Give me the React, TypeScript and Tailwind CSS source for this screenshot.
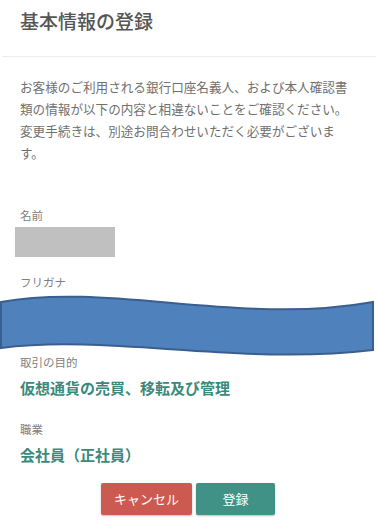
const font = { fontFamily: '"Noto Sans CJK JP", "Noto Sans", sans-serif' };

function Field({ label, children }: { label: string; children: React.ReactNode }) {
    return (
        <div>
            <p className="text-[11.5px] leading-[18px] text-[#808080]">{label}</p>
            {children}
        </div>
    );
}

function Wave() {
    return (
        <svg
            className="absolute left-[-20px] top-[-1px]"
            width="376"
            height="70"
            viewBox="0 0 376 70"
        >
            <path
                d="M1,12 C110,-8 240,36 373,12 L373,60 C240,76 110,44 1,58 Z"
                fill="#4f81bd"
                stroke="#3a5f8f"
                strokeWidth="2"
            />
        </svg>
    );
}

export default function App() {
    return (
        <div className="min-h-[524px] w-[376px] bg-white" style={font}>
            <div className="ml-[2px] border-b border-[#ececec] px-[18px] pt-[7px] pb-[21px]">
                <h1 className="text-[19px] font-medium leading-[28px] text-[#555]">基本情報の登録</h1>
            </div>

            <div className="px-5">
                <p className="mt-[19px] text-[12.6px] leading-[22px] text-[#707070]">
                    お客様のご利用される銀行口座名義人、および本人確認書類の情報が以下の内容と相違ないことをご確認ください。変更手続きは、別途お問合わせいただく必要がございます。
                </p>

                <div className="mt-[42px]">
                    <Field label="名前">
                        <div className="-ml-[5px] mt-[3px] h-[30px] w-[100px] bg-[#c0c0c0]" />
                    </Field>
                </div>

                <div className="mt-[16px]">
                    <Field label="フリガナ">
                        <div className="relative h-[62px]">
                            <Wave />
                        </div>
                    </Field>
                </div>

                <Field label="取引の目的">
                    <p className="mt-[6px] text-[15px] font-bold leading-[22px] text-[#3a8a7c]">
                        仮想通貨の売買、移転及び管理
                    </p>
                </Field>

                <div className="mt-[21px]">
                    <Field label="職業">
                        <p className="mt-[6px] text-[15px] font-bold leading-[22px] text-[#3a8a7c]">
                            会社員（正社員）
                        </p>
                    </Field>
                </div>

                <div className="mt-[17px] flex justify-center gap-1">
                    <button className="h-8 w-[91px] rounded-[2px] bg-[#cd5a50] text-[13px] font-normal text-white shadow-[0_1px_2px_rgba(0,0,0,0.25)]">
                        キャンセル
                    </button>
                    <button className="h-8 w-[79px] rounded-[2px] bg-[#3f9285] text-[13px] font-normal text-white shadow-[0_1px_2px_rgba(0,0,0,0.25)]">
                        登録
                    </button>
                </div>
            </div>
        </div>
    );
}
